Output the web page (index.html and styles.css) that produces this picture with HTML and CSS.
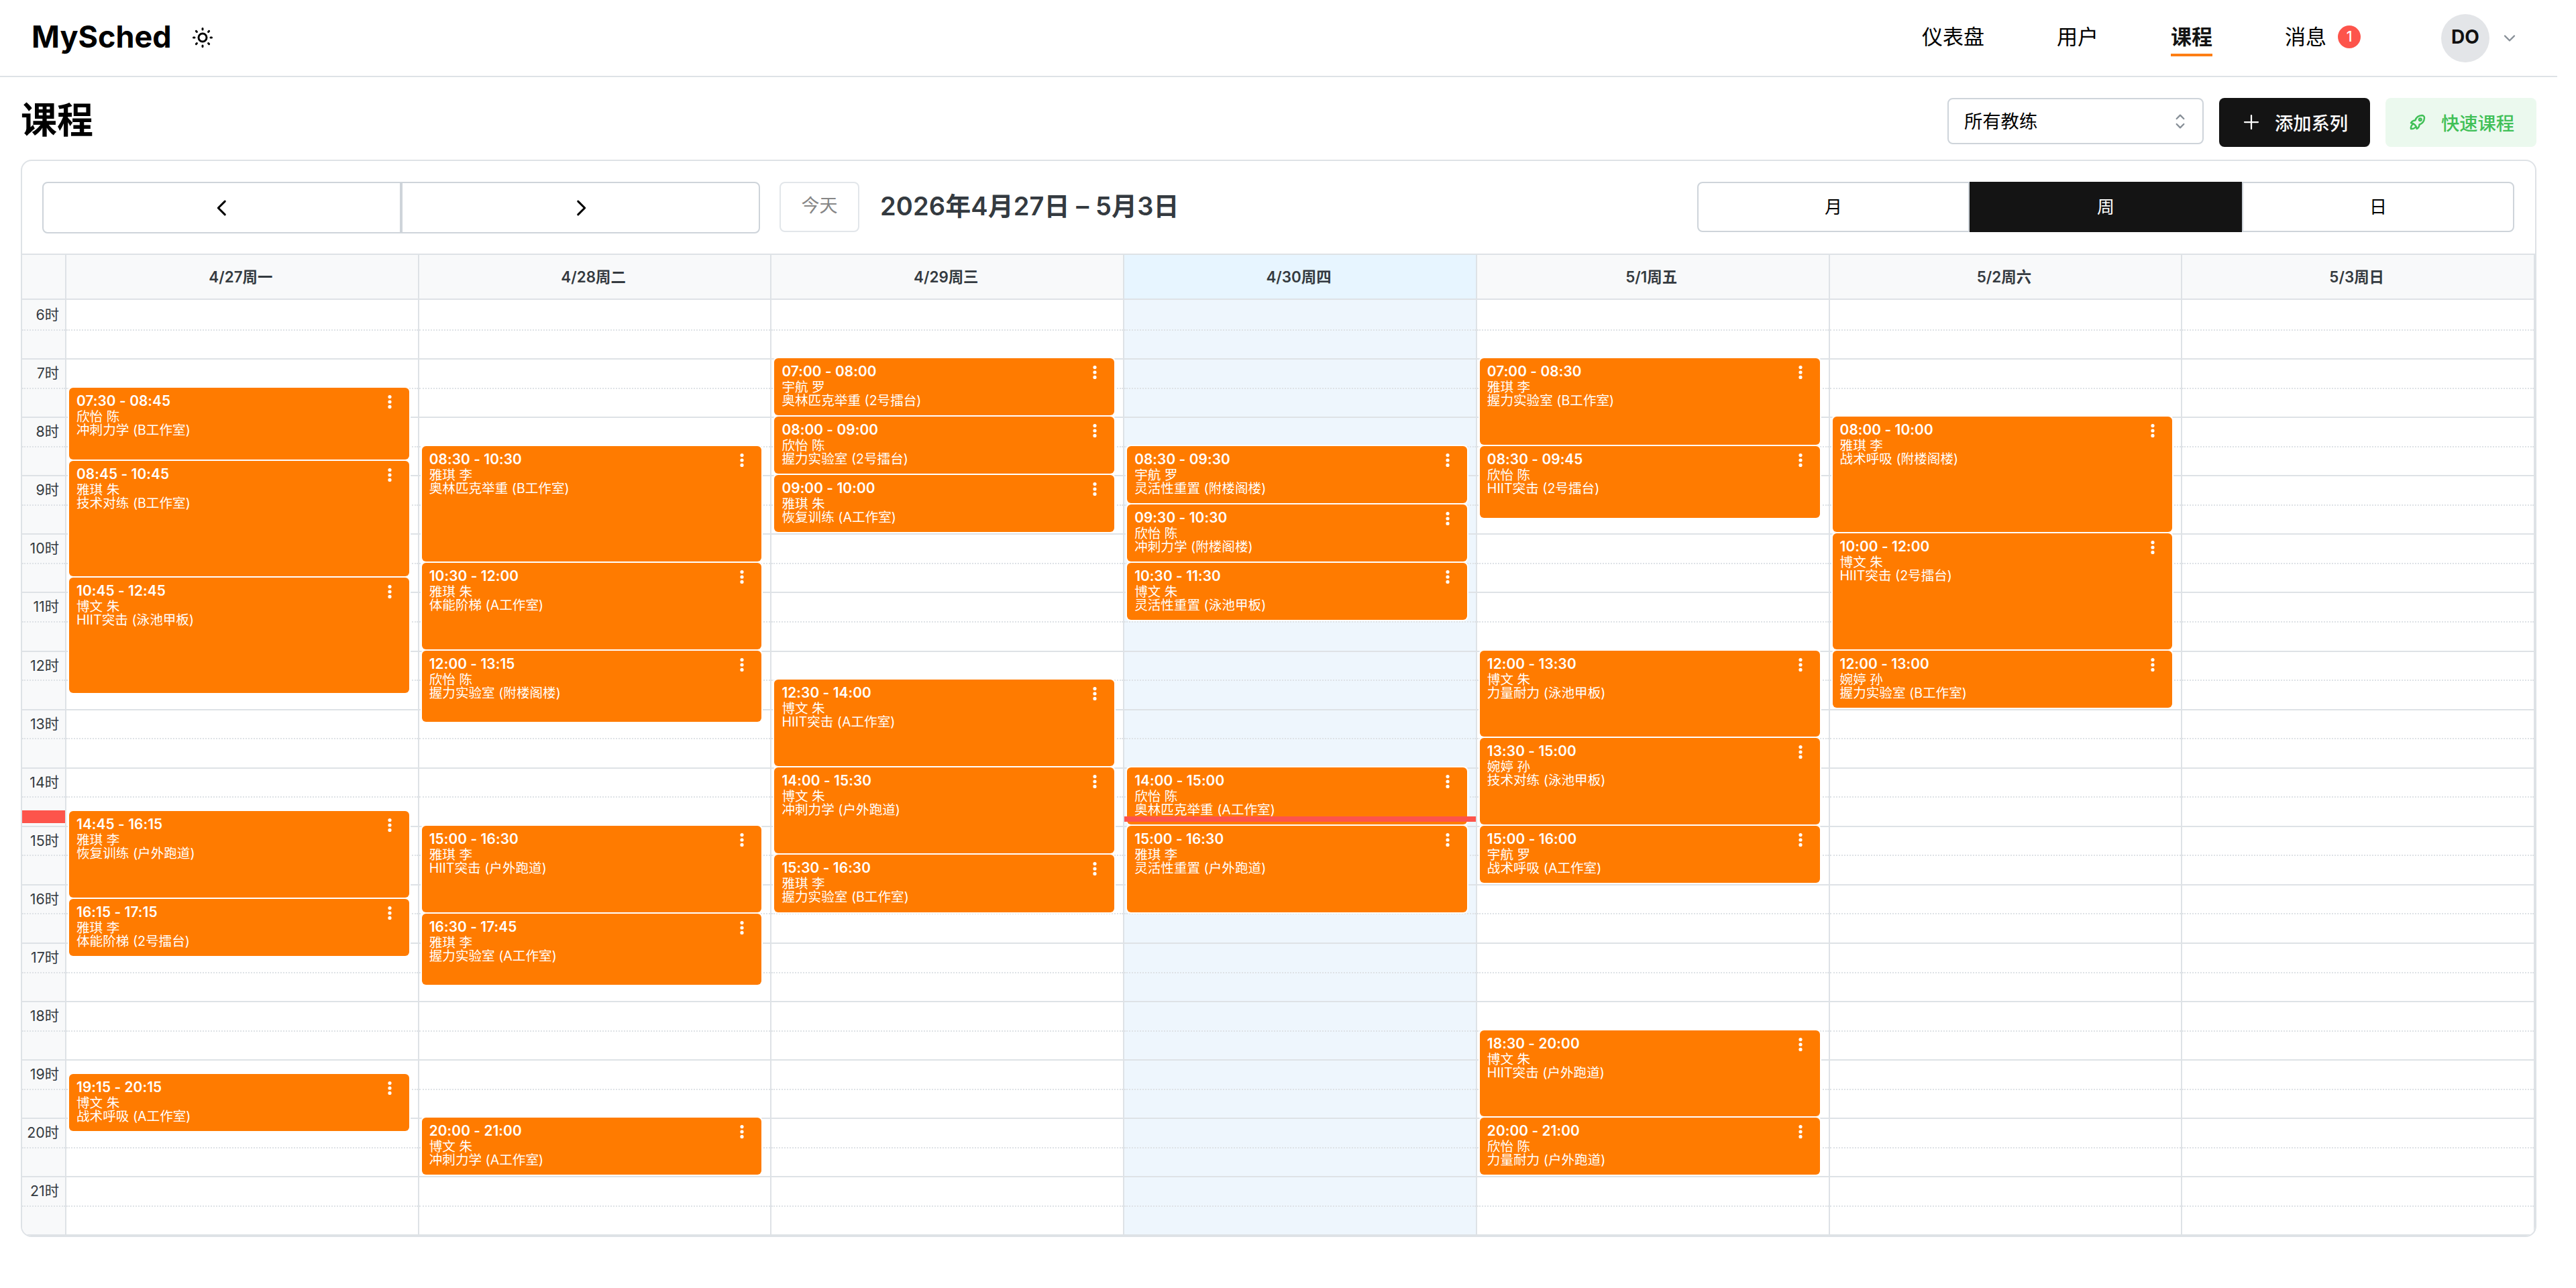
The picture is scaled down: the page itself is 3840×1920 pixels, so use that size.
FILE: index.html
```html
<!DOCTYPE html>
<html lang="zh-CN">
<head>
<meta charset="utf-8">
<title>MySched - 课程</title>
<link rel="stylesheet" href="styles.css">
</head>
<body>
<div class="page">
  <header class="topbar">
    <div class="brand">
      <span class="logo">MySched</span>
      <svg class="sun" viewBox="0 0 24 24" fill="none" stroke="currentColor" stroke-width="2" stroke-linecap="round"><circle cx="12" cy="12" r="4"/><path d="M3 12h1m8-9v1m8 8h1m-9 8v1M5.6 5.6l.7.7m12.1-.7l-.7.7m0 11.4l.7.7m-12.1-.7l-.7.7"/></svg>
    </div>
    <nav class="nav">
      <a class="nav-link">仪表盘</a>
      <a class="nav-link">用户</a>
      <a class="nav-link active">课程</a>
      <a class="nav-link">消息<span class="badge">1</span></a>
      <div class="account"><span class="avatar">DO</span><svg class="chev" viewBox="0 0 24 24" fill="none" stroke="currentColor" stroke-width="2" stroke-linecap="round" stroke-linejoin="round"><path d="M6 9l6 6l6-6"/></svg></div>
    </nav>
  </header>
  <div class="heading">
    <h1>课程</h1>
    <div class="actions">
      <div class="select"><span>所有教练</span><svg viewBox="0 0 24 24" fill="none" stroke="currentColor" stroke-width="1.7" stroke-linecap="round" stroke-linejoin="round"><path d="M8 9l4-4l4 4M16 15l-4 4l-4-4"/></svg></div>
      <div class="btn dark"><svg class="plus" viewBox="0 0 24 24" fill="none" stroke="currentColor" stroke-width="1.8" stroke-linecap="round"><path d="M12 4v16M4 12h16"/></svg>添加系列</div>
      <div class="btn green"><svg viewBox="0 0 24 24" fill="none" stroke="currentColor" stroke-width="2" stroke-linecap="round" stroke-linejoin="round"><path d="M4 13a8 8 0 0 1 7 7a6 6 0 0 0 3-5a9 9 0 0 0 6-8a3 3 0 0 0-3-3a9 9 0 0 0-8 6a6 6 0 0 0-5 3M7 14a6 6 0 0 0-3 6a6 6 0 0 0 6-3"/><circle cx="15" cy="9" r="1.4"/></svg>快速课程</div>
    </div>
  </div>
  <main class="card">
    <div class="toolbar">
      <div class="pager">
        <div class="cell"><svg viewBox="0 0 24 24" fill="none" stroke="currentColor" stroke-width="2.2" stroke-linecap="round" stroke-linejoin="round"><path d="M15 5l-7 7l7 7"/></svg></div>
        <div class="cell"><svg viewBox="0 0 24 24" fill="none" stroke="currentColor" stroke-width="2.2" stroke-linecap="round" stroke-linejoin="round"><path d="M9 5l7 7l-7 7"/></svg></div>
      </div>
      <div class="today">今天</div>
      <h2>2026年4月27日 – 5月3日</h2>
      <div class="views"><div class="cell">月</div><div class="cell on">周</div><div class="cell">日</div></div>
    </div>
    <div class="week" id="week"></div>
  </main>
</div>
<script src="calendar.js"></script>
</body>
</html>
```
FILE: styles.css
```css
* { box-sizing: border-box; }
body { margin: 0; background: #fff; color: #000; font-family: Inter, "Noto Sans CJK SC", sans-serif; }
h1, h2 { margin: 0; }
.page { width: 3812px; height: 1920px; overflow: hidden; }
.topbar { height: 115px; border-bottom: 2px solid #dee2e6; display: flex; justify-content: space-between; align-items: center; padding: 0 57px 0 47px; }
.brand { display: flex; align-items: center; gap: 28px; }
.logo { font-size: 45px; font-weight: 700; line-height: 60px; margin-bottom: 4px; }
.sun { width: 36px; height: 36px; margin-bottom: 2px; }
.nav { display: flex; align-items: center; font-size: 31px; }
.nav-link { position: relative; display: flex; align-items: center; height: 60px; margin: 0 108px 5px 0; padding-bottom: 4px; }
.nav-link:nth-child(4) { margin-right: 120px; }
.nav-link.active { font-weight: 700; color: #141414; }
.nav-link.active::after { content: ""; position: absolute; left: 0; right: 0; bottom: 0; height: 4px; background: #fd7e14; }
.badge { width: 34px; height: 34px; margin: 5px 0 0 17px; border-radius: 50%; background: #fd544b; color: #fff; font-size: 21px; font-weight: 500; line-height: 34px; text-align: center; }
.account { display: flex; align-items: center; gap: 16px; }
.avatar { width: 72px; height: 72px; border-radius: 50%; background: #e3e5e8; color: #111; font-size: 28px; font-weight: 700; line-height: 69px; text-align: center; }
.chev { width: 28px; height: 28px; color: #868e96; }
.heading { height: 123px; padding: 0 31px; display: flex; justify-content: space-between; align-items: flex-start; }
h1 { font-size: 54px; line-height: 76px; font-weight: 700; margin-top: 27px; }
.actions { display: flex; align-items: flex-start; gap: 23px; margin-top: 31px; }
.select { width: 382px; height: 69px; border: 2px solid #ced4da; border-radius: 8px; display: flex; align-items: center; justify-content: space-between; padding: 0 17px 0 23px; font-size: 27.3px; }
.select span { margin-bottom: 3px; }
.select svg { width: 32px; height: 32px; color: #868e96; }
.btn { width: 225px; height: 73px; border-radius: 8px; display: flex; align-items: center; justify-content: center; gap: 20px; padding-bottom: 2px; font-size: 27.3px; font-weight: 500; }
.btn svg { width: 30px; height: 30px; }
.dark { background: #141414; color: #fff; }
.green { background: #ebf9ee; color: #40c057; }
.card { width: 3750px; height: 1606px; margin-left: 31px; border: 2px solid #dee2e6; border-radius: 16px; overflow: hidden; }
.toolbar { height: 138px; padding: 31px 31px 0 30px; display: flex; align-items: flex-start; }
.pager { width: 1070px; height: 77px; display: flex; }
.cell { flex: 1; border: 2px solid #ced4da; display: flex; align-items: center; justify-content: center; font-size: 26px; }
.cell:first-child { border-radius: 8px 0 0 8px; }
.cell:last-child { border-radius: 0 8px 8px 0; }
.cell svg { width: 34px; height: 34px; }
.today { width: 119px; height: 75px; margin: 0 31px 0 29px; border: 2px solid #e2e6ea; border-radius: 8px; color: #868686; font-size: 27px; line-height: 68px; text-align: center; }
h2 { font-size: 38px; line-height: 72px; color: #343a40; font-weight: 600; letter-spacing: .1px; }
.views { width: 1218px; height: 75px; margin-left: auto; display: flex; }
.views .cell { padding-bottom: 4px; }
.views .on { background: #141414; border-color: #141414; color: #fff; }
.week { height: 1464px; display: grid; grid-template: 67px 1fr / 64px repeat(7, 1fr); border: solid #dee2e6; border-width: 2px 2px 2px 0; }
.day-head { background: #f8f9fa; border-bottom: 2px solid #dee2e6; border-left: 2px solid #dee2e6; color: #343a40; font-size: 22.4px; font-weight: 600; padding: 0 4px 3px 0; display: flex; align-items: center; justify-content: center; }
.day-head:first-child, .hours { border-left: 0; }
.day-head.is-today { background: #e7f5ff; }
.hours { background: #f8f9fa; position: relative; height: 1393px; overflow: hidden; }
.day { position: relative; height: 1393px; border-left: 2px solid #dee2e6; overflow: hidden; }
.day.is-today { background: #eef6fd; }
.slot { height: 43.55px; border-top: 2px dotted #dee2e6; color: #343a40; font-size: 21.3px; line-height: 41px; text-align: right; padding-right: 9px; }
.slot:nth-child(odd) { border-top-style: solid; }
.slot:first-child { border-top-color: transparent; }
.event { position: absolute; left: 4px; right: 13px; background: #ff7b00; color: #fff; border-radius: 6px; box-shadow: 0 0 0 2px #fff; padding: 9px 11px; font-size: 19.6px; line-height: 20px; overflow: hidden; white-space: nowrap; }
.time { font-size: 20.8px; font-weight: 600; line-height: 22px; height: 24px; letter-spacing: .1px; }
.dots { position: absolute; right: 26px; top: 11px; width: 6px; height: 20px; }
.now-line { position: absolute; left: 0; right: 0; height: 8px; background: #fd544b; }
.now-mark { position: absolute; left: 0; right: 0; height: 19px; background: #fd544b; }
```
FILE: calendar.js
```js
const HOUR = 87.1, START = 6;
const days = [
  ["4/27周一", [["07:30","08:45","欣怡 陈","冲刺力学 (B工作室)"],["08:45","10:45","雅琪 朱","技术对练 (B工作室)"],["10:45","12:45","博文 朱","HIIT突击 (泳池甲板)"],["14:45","16:15","雅琪 李","恢复训练 (户外跑道)"],["16:15","17:15","雅琪 李","体能阶梯 (2号擂台)"],["19:15","20:15","博文 朱","战术呼吸 (A工作室)"]]],
  ["4/28周二", [["08:30","10:30","雅琪 李","奥林匹克举重 (B工作室)"],["10:30","12:00","雅琪 朱","体能阶梯 (A工作室)"],["12:00","13:15","欣怡 陈","握力实验室 (附楼阁楼)"],["15:00","16:30","雅琪 李","HIIT突击 (户外跑道)"],["16:30","17:45","雅琪 李","握力实验室 (A工作室)"],["20:00","21:00","博文 朱","冲刺力学 (A工作室)"]]],
  ["4/29周三", [["07:00","08:00","宇航 罗","奥林匹克举重 (2号擂台)"],["08:00","09:00","欣怡 陈","握力实验室 (2号擂台)"],["09:00","10:00","雅琪 朱","恢复训练 (A工作室)"],["12:30","14:00","博文 朱","HIIT突击 (A工作室)"],["14:00","15:30","博文 朱","冲刺力学 (户外跑道)"],["15:30","16:30","雅琪 李","握力实验室 (B工作室)"]]],
  ["4/30周四", [["08:30","09:30","宇航 罗","灵活性重置 (附楼阁楼)"],["09:30","10:30","欣怡 陈","冲刺力学 (附楼阁楼)"],["10:30","11:30","博文 朱","灵活性重置 (泳池甲板)"],["14:00","15:00","欣怡 陈","奥林匹克举重 (A工作室)"],["15:00","16:30","雅琪 李","灵活性重置 (户外跑道)"]]],
  ["5/1周五", [["07:00","08:30","雅琪 李","握力实验室 (B工作室)"],["08:30","09:45","欣怡 陈","HIIT突击 (2号擂台)"],["12:00","13:30","博文 朱","力量耐力 (泳池甲板)"],["13:30","15:00","婉婷 孙","技术对练 (泳池甲板)"],["15:00","16:00","宇航 罗","战术呼吸 (A工作室)"],["18:30","20:00","博文 朱","HIIT突击 (户外跑道)"],["20:00","21:00","欣怡 陈","力量耐力 (户外跑道)"]]],
  ["5/2周六", [["08:00","10:00","雅琪 李","战术呼吸 (附楼阁楼)"],["10:00","12:00","博文 朱","HIIT突击 (2号擂台)"],["12:00","13:00","婉婷 孙","握力实验室 (B工作室)"]]],
  ["5/3周日", []]
];
const TODAY = 3, NOW = 8.84;
const hours = t => { const [h, m] = t.split(":"); return +h + m / 60 - START; };
const dots = '<svg class="dots" viewBox="0 0 6 20" fill="currentColor"><circle cx="3" cy="2.6" r="2.6"/><circle cx="3" cy="10" r="2.6"/><circle cx="3" cy="17.4" r="2.6"/></svg>';
const slots = label => Array.from({ length: 32 }, (_, i) => `<div class="slot">${label && i % 2 === 0 ? START + i / 2 + "时" : ""}</div>`).join("");
let html = '<div class="day-head"></div>';
days.forEach(([name], i) => { html += `<div class="day-head${i === TODAY ? " is-today" : ""}">${name}</div>`; });
html += `<div class="hours">${slots(true)}<div class="now-mark" style="top:${NOW * HOUR - 9}px"></div></div>`;
days.forEach(([, events], i) => {
  html += `<div class="day${i === TODAY ? " is-today" : ""}">${slots(false)}`;
  events.forEach(([from, to, coach, title]) => {
    const top = hours(from) * HOUR, height = (hours(to) - hours(from)) * HOUR - 2;
    html += `<div class="event" style="top:${top}px;height:${height}px"><div class="time">${from} - ${to}</div><div>${coach}</div><div>${title}</div>${dots}</div>`;
  });
  if (i === TODAY) html += `<div class="now-line" style="top:${NOW * HOUR}px"></div>`;
  html += "</div>";
});
document.getElementById("week").innerHTML = html;
```
